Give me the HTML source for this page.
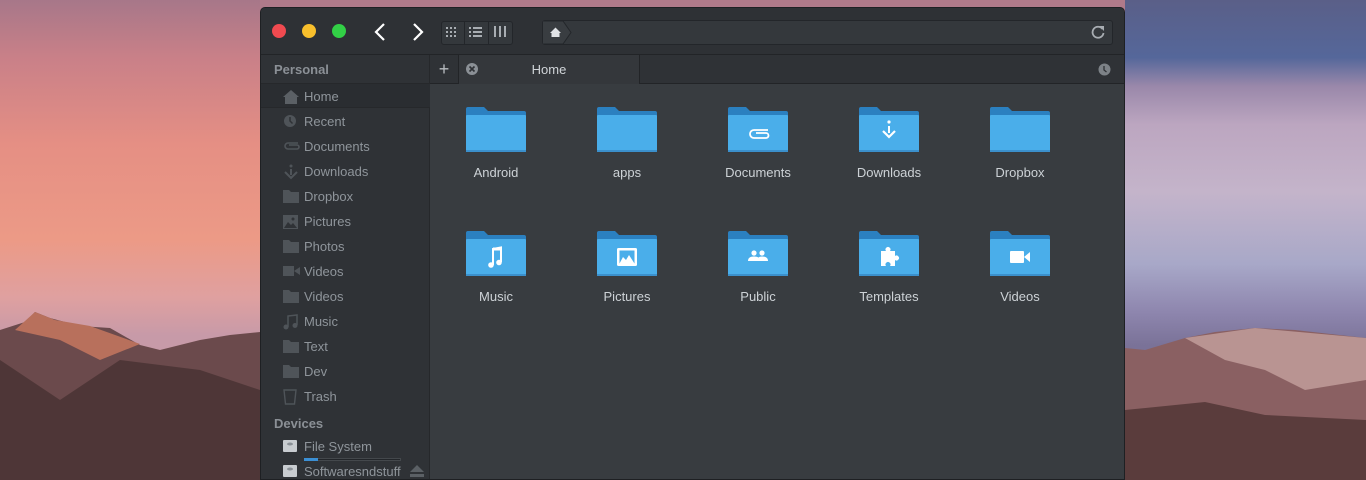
<!DOCTYPE html>
<html><head><meta charset="utf-8"><style>
*{margin:0;padding:0;box-sizing:border-box}
body{width:1366px;height:480px;overflow:hidden;position:relative;font-family:"Liberation Sans","DejaVu Sans",sans-serif;background:#b07a8a}
.abs{position:absolute}
#bgl{left:0;top:0;width:260px;height:480px;background:linear-gradient(180deg,#a77789 0%,#c98088 12%,#e58f84 30%,#ec9a86 50%,#dfa0a0 62%,#c79aa8 70%)}
#bgr{left:1125px;top:0;width:241px;height:480px;background:linear-gradient(180deg,#5a5f88 0%,#55679a 12%,#9a88aa 18%,#bca6c0 26%,#c4b4ca 40%,#a8a8c8 55%,#8e86ae 65%,#7a7298 72%)}
#win{left:260px;top:7px;width:865px;height:473px;background:#383c40;border-radius:5px 5px 0 0;overflow:hidden;border:1px solid #1e2023}
#title{left:0;top:0;width:865px;height:47px;background:#2e3135;border-bottom:1px solid #222427}
.dot{width:14px;height:14px;border-radius:50%;top:16px}
#side{left:0;top:47px;width:169px;height:430px;background:#2f3236;border-right:1px solid #26282b}
.si{position:absolute;left:0;width:169px;height:25px;font-size:13px;color:#8f959b;line-height:25px}
.si span{position:absolute;left:43px}
.si svg{position:absolute;left:22px;top:5px}
.hd{position:absolute;left:13px;font-size:13px;font-weight:bold;color:#8b9096}
.f{position:absolute;width:100px;text-align:center;font-size:13px;color:#cdd2d6}
.f svg{display:block;margin:0 auto 12px}
</style></head><body>
<div id="bgl" class="abs"></div>
<svg class="abs" style="left:0;top:300px" width="260" height="180"><polygon points="0,30 25,22 35,12 50,18 80,26 110,28 140,45 160,50 200,40 230,35 260,32 260,180 0,180" fill="#6b4a4c"/><polygon points="15,30 35,12 55,20 90,26 140,44 100,60 60,40" fill="#b8705c"/><polygon points="0,60 60,100 120,60 200,70 260,90 260,180 0,180" fill="#4e3637"/></svg>
<div id="bgr" class="abs"></div>
<svg class="abs" style="left:1125px;top:320px" width="241" height="160"><polygon points="0,28 20,30 60,18 90,12 130,8 170,10 241,18 241,160 0,160" fill="#8a6062"/><polygon points="60,18 130,8 241,18 241,60 180,70 140,50 100,40" fill="#b99492"/><polygon points="0,90 80,82 140,95 241,100 241,160 0,160" fill="#5a3c3c"/></svg>
<div id="win" class="abs">
 <div id="title" class="abs">
  <div class="dot abs" style="left:11px;background:#f04a50"></div>
  <div class="dot abs" style="left:41px;background:#f8bf2c"></div>
  <div class="dot abs" style="left:71px;background:#32d046"></div>
  <svg class="abs" style="left:113px;top:14px" width="12" height="20"><path d="M10 2 L2 10 L10 18" stroke="#fff" stroke-width="2.2" fill="none"/></svg>
  <svg class="abs" style="left:151px;top:14px" width="12" height="20"><path d="M2 2 L10 10 L2 18" stroke="#fff" stroke-width="2.2" fill="none"/></svg>
  <div class="abs" style="left:180px;top:13px;width:72px;height:24px;border:1px solid #23262a;border-radius:3px;background:#34383c"></div>
  <div class="abs" style="left:203px;top:14px;width:1px;height:22px;background:#23262a"></div>
  <div class="abs" style="left:227px;top:14px;width:1px;height:22px;background:#23262a"></div>
  <svg class="abs" style="left:185px;top:19px" width="12" height="12" fill="#a8adb2"><rect x="0" y="0" width="2" height="2"/><rect x="4" y="0" width="2" height="2"/><rect x="8" y="0" width="2" height="2"/><rect x="0" y="4" width="2" height="2"/><rect x="4" y="4" width="2" height="2"/><rect x="8" y="4" width="2" height="2"/><rect x="0" y="8" width="2" height="2"/><rect x="4" y="8" width="2" height="2"/><rect x="8" y="8" width="2" height="2"/></svg>
  <svg class="abs" style="left:208px;top:19px" width="14" height="12" fill="#a8adb2"><rect x="0" y="0" width="2" height="2"/><rect x="4" y="0" width="9" height="2"/><rect x="0" y="4" width="2" height="2"/><rect x="4" y="4" width="9" height="2"/><rect x="0" y="8" width="2" height="2"/><rect x="4" y="8" width="9" height="2"/></svg>
  <svg class="abs" style="left:233px;top:18px" width="12" height="12" fill="#a8adb2"><rect x="0" y="0" width="2" height="11"/><rect x="5" y="0" width="2" height="11"/><rect x="10" y="0" width="2" height="11"/></svg>
  <div class="abs" style="left:281px;top:12px;width:571px;height:25px;border:1px solid #23262a;border-radius:3px;background:#34383c"></div>
  <svg class="abs" style="left:282px;top:13px" width="30" height="23"><path d="M0 0 H20 L28 11.5 L20 23 H0" fill="#393d41" stroke="#23262a"/><path d="M7 12 L12.5 6.5 L18 12 H16.5 V16 H8.5 V12 Z" fill="#e0e3e6"/></svg>
  <svg class="abs" style="left:830px;top:17px" width="14" height="14"><path d="M11.5 4 A5.5 5.5 0 1 0 12.5 8" stroke="#a8adb2" stroke-width="1.8" fill="none"/><path d="M8 1 L13 1 L13 6 Z" fill="#a8adb2"/></svg>
 </div>
 <div id="side" class="abs">
  <div class="hd" style="top:7px">Personal</div>
  <div class="si" style="top:28px;background:#2a2d31;border-top:1px solid #26282b;border-bottom:1px solid #26282b"><svg width="16" height="16"><path d="M0 8 L8 1 L16 8 H14 V15 H2 V8Z" fill="#5b6065"/></svg><span>Home</span></div>
  <div class="si" style="top:54px"><svg width="14" height="14"><circle cx="7" cy="7" r="6" fill="#4f5459"/><path d="M7 3 V7 L9.5 9.5" stroke="#2f3236" stroke-width="1.5" fill="none"/></svg><span>Recent</span></div>
  <div class="si" style="top:79px"><svg width="18" height="14"><path d="M15 4 H5 A3 3 0 0 0 5 10 H14 A2 2 0 0 0 14 6 H6" stroke="#4f5459" stroke-width="1.6" fill="none"/></svg><span>Documents</span></div>
  <div class="si" style="top:104px"><svg width="16" height="16"><circle cx="8" cy="2" r="1.5" fill="#4f5459"/><rect x="7" y="5" width="2" height="6" fill="#4f5459"/><path d="M2 8 L8 14 L14 8" stroke="#4f5459" stroke-width="2" fill="none"/></svg><span>Downloads</span></div>
  <div class="si" style="top:129px"><svg width="16" height="14"><path d="M0 1 H6 L8 3 H16 V14 H0Z" fill="#4f5459"/></svg><span>Dropbox</span></div>
  <div class="si" style="top:154px"><svg width="16" height="16"><rect x="0" y="1" width="15" height="14" fill="#4f5459"/><path d="M1 14 L5 8 L8 11 L10 9 L14 14Z" fill="#2f3236"/><circle cx="10" cy="5" r="1.5" fill="#2f3236"/></svg><span>Pictures</span></div>
  <div class="si" style="top:179px"><svg width="16" height="14"><path d="M0 1 H6 L8 3 H16 V14 H0Z" fill="#4f5459"/></svg><span>Photos</span></div>
  <div class="si" style="top:204px"><svg width="17" height="14"><rect x="0" y="2" width="11" height="10" fill="#4f5459"/><path d="M11 7 L17 3 V11Z" fill="#4f5459"/></svg><span>Videos</span></div>
  <div class="si" style="top:229px"><svg width="16" height="14"><path d="M0 1 H6 L8 3 H16 V14 H0Z" fill="#4f5459"/></svg><span>Videos</span></div>
  <div class="si" style="top:254px"><svg width="16" height="16"><path d="M5 13 V2 L14 1 V11" stroke="#4f5459" stroke-width="1.5" fill="none"/><circle cx="3" cy="13" r="2.5" fill="#4f5459"/><circle cx="12" cy="11.5" r="2.5" fill="#4f5459"/></svg><span>Music</span></div>
  <div class="si" style="top:279px"><svg width="16" height="14"><path d="M0 1 H6 L8 3 H16 V14 H0Z" fill="#4f5459"/></svg><span>Text</span></div>
  <div class="si" style="top:304px"><svg width="16" height="14"><path d="M0 1 H6 L8 3 H16 V14 H0Z" fill="#4f5459"/></svg><span>Dev</span></div>
  <div class="si" style="top:329px"><svg width="14" height="16"><path d="M1 1 H13 L11.5 15 H2.5Z" stroke="#4f5459" stroke-width="1.4" fill="none"/></svg><span>Trash</span></div>
  <div class="hd" style="top:361px">Devices</div>
  <div class="si" style="top:379px"><svg width="14" height="14"><rect x="0" y="1" width="14" height="12" rx="1" fill="#c8ccd0"/><ellipse cx="7" cy="5" rx="3" ry="1.5" fill="#8a9096"/></svg><span>File System</span></div>
  <div class="abs" style="left:43px;top:403px;width:97px;height:3px;background:#23262a;border:1px solid #44484c"></div>
  <div class="abs" style="left:43px;top:403px;width:14px;height:3px;background:#3b8fd4"></div>
  <div class="si" style="top:404px"><svg width="14" height="14"><rect x="0" y="1" width="14" height="12" rx="1" fill="#c8ccd0"/><ellipse cx="7" cy="5" rx="3" ry="1.5" fill="#8a9096"/></svg><span>Softwaresndstuff</span></div>
  <svg class="abs" style="left:149px;top:410px" width="14" height="12"><path d="M7 0 L14 7 H0Z" fill="#5b6065"/><rect x="0" y="9" width="14" height="3" fill="#5b6065"/></svg>
 </div>
 <div class="abs" style="left:169px;top:47px;width:696px;height:29px;background:#2f3236;border-bottom:1px solid #222427"></div>
 <div class="abs" style="left:169px;top:47px;width:29px;height:29px;border-right:1px solid #222427;color:#b8bcc0;font-size:18px;text-align:center;line-height:28px">+</div>
 <div class="abs" style="left:198px;top:47px;width:181px;height:29px;background:#34373b;border-right:1px solid #222427;color:#d0d4d8;font-size:13px;text-align:center;line-height:29px">Home</div>
 <svg class="abs" style="left:205px;top:55px" width="12" height="12"><circle cx="6" cy="6" r="6" fill="#8b9096"/><path d="M3.5 3.5 L8.5 8.5 M8.5 3.5 L3.5 8.5" stroke="#2f3236" stroke-width="1.6"/></svg>
 <svg class="abs" style="left:837px;top:55px" width="13" height="13"><circle cx="6.5" cy="6.5" r="6" fill="#7d8287"/><path d="M6 3 V7 L8.5 9" stroke="#2f3236" stroke-width="1.3" fill="none"/></svg>
</div>
<div class="abs" style="left:0;top:0">
<div class="f" style="left:446px;top:107px"><svg width="60" height="46"><path d="M0 2 Q0 0 2 0 H18 L22 4 H58 Q60 4 60 6 V20 H0Z" fill="#2b80c0"/><rect x="0" y="8" width="60" height="37" rx="1" fill="#4aaeea"/><rect x="0" y="43" width="60" height="2" fill="#3b90cc"/></svg>Android</div>
<div class="f" style="left:577px;top:107px"><svg width="60" height="46"><path d="M0 2 Q0 0 2 0 H18 L22 4 H58 Q60 4 60 6 V20 H0Z" fill="#2b80c0"/><rect x="0" y="8" width="60" height="37" rx="1" fill="#4aaeea"/><rect x="0" y="43" width="60" height="2" fill="#3b90cc"/></svg>apps</div>
<div class="f" style="left:708px;top:107px"><svg width="60" height="46"><path d="M0 2 Q0 0 2 0 H18 L22 4 H58 Q60 4 60 6 V20 H0Z" fill="#2b80c0"/><rect x="0" y="8" width="60" height="37" rx="1" fill="#4aaeea"/><rect x="0" y="43" width="60" height="2" fill="#3b90cc"/><path d="M40 23 H26 A4 4 0 0 0 26 31 H38 A2.5 2.5 0 0 0 38 26 H28" stroke="#fff" stroke-width="1.8" fill="none"/></svg>Documents</div>
<div class="f" style="left:839px;top:107px"><svg width="60" height="46"><path d="M0 2 Q0 0 2 0 H18 L22 4 H58 Q60 4 60 6 V20 H0Z" fill="#2b80c0"/><rect x="0" y="8" width="60" height="37" rx="1" fill="#4aaeea"/><rect x="0" y="43" width="60" height="2" fill="#3b90cc"/><circle cx="30" cy="15" r="1.6" fill="#fff"/><rect x="29" y="19" width="2" height="7" fill="#fff"/><path d="M24 24 L30 30 L36 24" stroke="#fff" stroke-width="2.2" fill="none"/></svg>Downloads</div>
<div class="f" style="left:970px;top:107px"><svg width="60" height="46"><path d="M0 2 Q0 0 2 0 H18 L22 4 H58 Q60 4 60 6 V20 H0Z" fill="#2b80c0"/><rect x="0" y="8" width="60" height="37" rx="1" fill="#4aaeea"/><rect x="0" y="43" width="60" height="2" fill="#3b90cc"/></svg>Dropbox</div>
<div class="f" style="left:446px;top:231px"><svg width="60" height="46"><path d="M0 2 Q0 0 2 0 H18 L22 4 H58 Q60 4 60 6 V20 H0Z" fill="#2b80c0"/><rect x="0" y="8" width="60" height="37" rx="1" fill="#4aaeea"/><rect x="0" y="43" width="60" height="2" fill="#3b90cc"/><path d="M27 34 V18 L35 16.5 V31" stroke="#fff" stroke-width="2" fill="none"/><circle cx="25" cy="34" r="2.8" fill="#fff"/><circle cx="33" cy="31.5" r="2.8" fill="#fff"/><rect x="27" y="16.5" width="8" height="3" fill="#fff"/></svg>Music</div>
<div class="f" style="left:577px;top:231px"><svg width="60" height="46"><path d="M0 2 Q0 0 2 0 H18 L22 4 H58 Q60 4 60 6 V20 H0Z" fill="#2b80c0"/><rect x="0" y="8" width="60" height="37" rx="1" fill="#4aaeea"/><rect x="0" y="43" width="60" height="2" fill="#3b90cc"/><rect x="20" y="17" width="20" height="18" rx="1.5" fill="#fff"/><rect x="22.5" y="19.5" width="15" height="13" fill="#4aaeea"/><path d="M22.5 32.5 L26 26 L29 29 L32 24 L37.5 32.5Z" fill="#fff"/></svg>Pictures</div>
<div class="f" style="left:708px;top:231px"><svg width="60" height="46"><path d="M0 2 Q0 0 2 0 H18 L22 4 H58 Q60 4 60 6 V20 H0Z" fill="#2b80c0"/><rect x="0" y="8" width="60" height="37" rx="1" fill="#4aaeea"/><rect x="0" y="43" width="60" height="2" fill="#3b90cc"/><circle cx="26" cy="22" r="2.6" fill="#fff"/><circle cx="34" cy="22" r="2.6" fill="#fff"/><path d="M20 30 Q20 25.5 26 25.5 Q32 25.5 32 30Z M29 30 Q29 25.5 34 25.5 Q40 25.5 40 30Z" fill="#fff"/></svg>Public</div>
<div class="f" style="left:839px;top:231px"><svg width="60" height="46"><path d="M0 2 Q0 0 2 0 H18 L22 4 H58 Q60 4 60 6 V20 H0Z" fill="#2b80c0"/><rect x="0" y="8" width="60" height="37" rx="1" fill="#4aaeea"/><rect x="0" y="43" width="60" height="2" fill="#3b90cc"/><path d="M22 20 H27 A2.5 2.5 0 1 1 31 20 H36 V25 A2.5 2.5 0 1 1 36 29 V35 H31 A2.5 2.5 0 1 0 27 35 H22Z" fill="#fff"/></svg>Templates</div>
<div class="f" style="left:970px;top:231px"><svg width="60" height="46"><path d="M0 2 Q0 0 2 0 H18 L22 4 H58 Q60 4 60 6 V20 H0Z" fill="#2b80c0"/><rect x="0" y="8" width="60" height="37" rx="1" fill="#4aaeea"/><rect x="0" y="43" width="60" height="2" fill="#3b90cc"/><rect x="20" y="20" width="14" height="12" rx="1" fill="#fff"/><path d="M34 26 L40 21 V31Z" fill="#fff"/></svg>Videos</div>
</div>
</body></html>
